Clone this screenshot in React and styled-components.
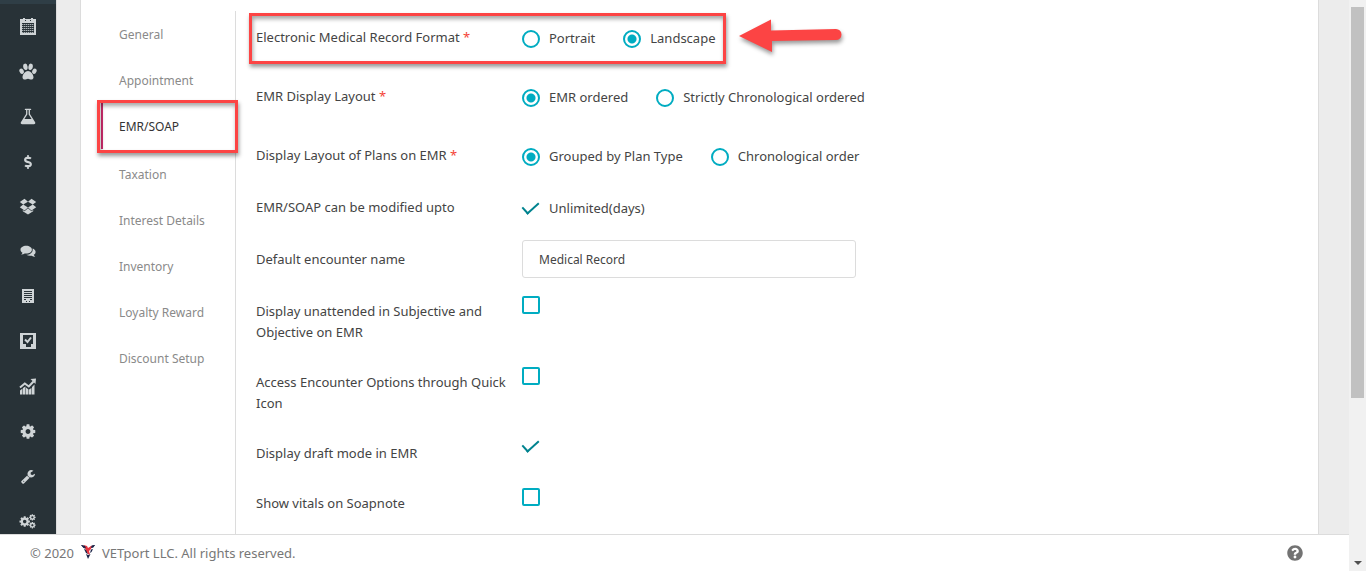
import React, { useState } from "react"
import styled, { createGlobalStyle } from "styled-components"
import { FaDollarSign, FaQuestionCircle } from "react-icons/fa"

const GlobalStyle = createGlobalStyle`
  * {
    box-sizing: border-box;
  }
  body {
    margin: 0;
    font-family: "Noto Sans", "Open Sans", sans-serif;
    font-size: 13px;
    line-height: 21px;
    color: #444;
    background: #fff;
  }
`

const Screen = styled.div`
  display: flex;
  height: 100vh;
  overflow: hidden;
`

const Page = styled.div`
  display: flex;
  flex-direction: column;
  flex: 1;
  min-width: 0;
`

const Body = styled.div`
  display: flex;
  flex: 1;
  min-height: 0;
`

const Sidebar = styled.nav`
  display: flex;
  flex-direction: column;
  flex: none;
  width: 56px;
  border-top: 4px solid #2f3e46;
  background: #283237;
  overflow: hidden;
`

const SidebarLink = styled.a`
  display: flex;
  flex: none;
  justify-content: center;
  align-items: center;
  height: 45px;
  color: #cfd4d6;
`

const Workspace = styled.main`
  flex: 1;
  min-width: 0;
  padding: 0 30px 0 23px;
  border-left: 1px solid #dcdcdc;
  background: #ececec;
  overflow: hidden;
`

const Card = styled.div`
  display: flex;
  min-height: 100%;
  border: solid #dcdcdc;
  border-width: 0 1px;
  background: #fff;
`

const Tabs = styled.nav`
  display: flex;
  flex-direction: column;
  flex: none;
  width: 155px;
  margin-top: 11px;
  padding-left: 20px;
  border-right: 1px solid #dcdcdc;
`

const Tab = styled.a`
  position: relative;
  display: flex;
  align-items: center;
  height: 46px;
  margin-bottom: ${(p) => (p.$active ? "2px" : 0)};
  padding-left: 16px;
  border-left: 2px solid ${(p) => (p.$active ? "#d02c6e" : "transparent")};
  color: ${(p) => (p.$active ? "#333" : "#8a8a8a")};
  font-size: 12px;
  text-decoration: none;
`

const Form = styled.form`
  flex: 1;
  min-width: 0;
  padding: 8px 20px 0;
`

const Row = styled.div`
  position: relative;
  display: grid;
  grid-template-columns: 250px 1fr;
  column-gap: 16px;
  align-items: center;
  min-height: ${(p) => p.$height}px;
`

const CheckRow = styled.div`
  display: grid;
  grid-template-columns: 250px 1fr;
  column-gap: 16px;
  align-items: start;
  padding: 8px 0 16px;

  > label {
    padding-top: 5px;
  }
`

const Required = styled.span`
  color: #f44336;
`

const Options = styled.div`
  display: flex;
  flex-wrap: wrap;
  gap: 28px;
  padding-top: 2px;
`

const Option = styled.label`
  display: flex;
  align-items: center;
  gap: 9px;
`

const Radio = styled.input.attrs({ type: "radio" })`
  appearance: none;
  width: 18px;
  height: 18px;
  margin: 0;
  border: 2px solid #00acc1;
  border-radius: 50%;
  background: #fff;

  &:checked {
    background: radial-gradient(circle, #00acc1 4px, #fff 5px);
  }
`

const Checkbox = styled.input.attrs({ type: "checkbox" })`
  appearance: none;
  display: flex;
  justify-content: center;
  width: 18px;
  height: 18px;
  margin: 0;
  border: 2px solid #00acc1;
  border-radius: 2px;

  &:checked {
    border-color: transparent;
  }

  &:checked::before {
    content: "";
    width: 7px;
    height: 14px;
    margin: -4px 2px 0 0;
    border: solid #00838f;
    border-width: 0 2px 2px 0;
    transform: rotate(48deg);
  }
`

const TextInput = styled.input`
  width: 100%;
  max-width: 334px;
  height: 38px;
  padding: 0 16px;
  border: 1px solid #dcdcdc;
  border-radius: 3px;
  color: #444;
  font-family: inherit;
  font-size: 12px;
`

const Highlight = styled.span`
  position: absolute;
  border: 3px solid #fc4444;
  box-shadow: 1px 3px 4px rgba(0, 0, 0, 0.4),
    inset 1px 3px 4px rgba(0, 0, 0, 0.35);
  pointer-events: none;
`

const TabHighlight = styled(Highlight)`
  inset: -3px -3px -4px -6px;
`

const RowHighlight = styled(Highlight)`
  top: 5px;
  left: -7px;
  width: 477px;
  height: 51px;
`

const Arrow = styled.svg`
  position: absolute;
  top: 8px;
  left: 480px;
  filter: drop-shadow(1px 3px 2px rgba(0, 0, 0, 0.4));
`

const Footer = styled.footer`
  display: flex;
  justify-content: space-between;
  align-items: center;
  flex: none;
  height: 37px;
  padding: 0 46px 0 30px;
  border-top: 1px solid #dcdcdc;
  color: #777;
`

const Copyright = styled.div`
  display: flex;
  align-items: center;
  gap: 7px;
`

const HelpButton = styled.button`
  display: flex;
  padding: 0;
  border: 0;
  background: none;
  color: #737373;
`

const ScrollTrack = styled.div`
  display: flex;
  flex-direction: column;
  justify-content: space-between;
  align-items: center;
  flex: none;
  width: 17px;
  padding: 7px 0 6px;
  background: #f1f1f1;
`

const ScrollThumb = styled.div`
  width: 13px;
  height: 70%;
  background: #c1c1c1;
`

const ScrollArrow = styled.div`
  border: 4px solid transparent;
  border-top-color: #505050;
  border-bottom: 0;
`

const cogPath =
  "M1152 896q0-106-75-181t-181-75-181 75-75 181 75 181 181 75 181-75 75-181zm512-109v222q0 12-8 23t-20 13l-185 28q-19 54-39 91 35 50 107 138 10 12 10 25t-9 23q-27 37-99 108t-94 71q-12 0-26-9l-138-108q-44 23-91 38-16 136-29 186-7 28-36 28h-222q-14 0-24.5-8.500t-11.500-21.500l-28-184q-49-16-90-37l-141 107q-10 9-25 9-14 0-25-11-126-114-165-168-7-10-7-23 0-12 8-23 15-21 51-66.500t54-70.500q-27-50-41-99l-183-27q-13-2-21-12.500t-8-23.500v-222q0-12 8-23t19-13l186-28q14-46 39-92-40-57-107-138-10-12-10-24 0-10 9-23 26-36 98.500-107.500t94.500-71.500q13 0 26 10l138 107q44-23 91-38 16-136 29-186 7-28 36-28h222q14 0 24.500 8.500t11.500 21.500l28 184q49 16 90 37l142-107q9-9 24-9 13 0 25 10 129 119 165 170 7 8 7 22 0 12-8 23-15 21-51 66.500t-54 70.500q26 50 41 98l183 28q13 2 21 12.500t8 23.500z"

const CalendarIcon = () => (
  <svg width="16" height="17" viewBox="0 0 16 17" fill="currentColor">
    <path fillRule="evenodd" d="M0 1h16v16H0zM2 5v10h12V5z" />
    <path d="M3 0h2v2H3zM11 0h2v2h-2z" />
    <path
      d="M2 6.500h12M2 8.500h12M2 10.500h12M2 12.500h12M2 14.500h12"
      stroke="currentColor"
      strokeDasharray="1.400 .6"
      opacity=".8"
    />
    <path d="M5 2.500h1M10 2.500h1" stroke="#283237" />
  </svg>
)

const PawIcon = () => (
  <svg width="18" height="17" viewBox="0 0 18 17" fill="currentColor">
    <ellipse cx="6.400" cy="3.800" rx="2.200" ry="3.200" transform="rotate(-10 6.400 3.800)" />
    <ellipse cx="11.600" cy="3.800" rx="2.200" ry="3.200" transform="rotate(10 11.600 3.800)" />
    <ellipse cx="2.600" cy="8.200" rx="2.100" ry="2.800" transform="rotate(-25 2.600 8.200)" />
    <ellipse cx="15.400" cy="8.200" rx="2.100" ry="2.800" transform="rotate(25 15.400 8.200)" />
    <path d="M9 8c2.500 0 5.500 3.500 5.500 6.200 0 1.700-1 2.300-2.300 2.300S10.300 15.700 9 15.700s-2 .8-3.200.8-2.300-.6-2.300-2.300C3.500 11.500 6.500 8 9 8z" />
  </svg>
)

const FlaskIcon = () => (
  <svg width="18" height="19" viewBox="0 0 1792 1792" fill="currentColor">
    <path d="M1591 1448q56 89 21.500 152.500t-140.500 63.500h-1152q-106 0-140.500-63.500t21.500-152.500l503-793v-399h-64q-26 0-45-19t-19-45 19-45 45-19h512q26 0 45 19t19 45-19 45-45 19h-64v399zm-779-725l-272 429h712l-272-429-20-31v-436h-128v436z" />
  </svg>
)

const DropboxIcon = () => (
  <svg width="18" height="17" viewBox="0 0 18 17" fill="currentColor">
    <path d="M5.500.8L9 3.700 4.200 6.600.8 4zM12.500.8L9 3.700l4.800 2.900L17.200 4zM.8 9.300l3.400-2.700L9 9.500l-3.500 2.900zM17.200 9.300l-3.400-2.700L9 9.500l3.500 2.900z" />
    <path d="M9 10.300l3.500 2.900 1.700-1.100v1.200L9 16.500l-5.200-3.200v-1.200l1.700 1.100z" />
  </svg>
)

const CommentsIcon = () => (
  <svg width="16" height="13" viewBox="0 0 16 13" fill="currentColor">
    <path d="M12.600 3.500c1.800.7 3 1.900 3 3.400 0 1.200-.7 2.200-1.800 2.900.2.900.7 1.400 1.400 1.900-1.400.1-2.600-.3-3.500-1-2 .3-4 0-5.400-.9 4-.1 6.900-2.400 6.300-6.300z" />
    <path d="M6.200.8c3.200 0 5.700 1.700 5.700 3.900S9.400 8.600 6.200 8.600c-.5 0-1 0-1.500-.1-1 .8-2.200 1.200-3.600 1.100.7-.5 1.200-1 1.400-1.800C1.300 7.100.5 6 .5 4.700.5 2.500 3 .8 6.200.8z" />
  </svg>
)

const BuildingIcon = () => (
  <svg width="12" height="15" viewBox="0 0 12 15" fill="currentColor">
    <path
      fillRule="evenodd"
      d="M0 0h12v14H0zM2 2v1h8V2zM2 4v1h8V4zM2 6v1h8V6zM2 8v1h8V8zM2 10v1h2v-1zM8 10v1h2v-1zM4 12v1h1v-1zM7 12v1h1v-1z"
    />
  </svg>
)

const InboxCheckIcon = () => (
  <svg width="18" height="17" viewBox="0 0 18 17" fill="currentColor">
    <path
      fillRule="evenodd"
      d="M1 0h16v16H1zM4 2v9h3v3h5v-3h2V2z"
    />
    <path d="M6 6.500l2.500 2.500L12 4.500" stroke="currentColor" strokeWidth="2" fill="none" />
  </svg>
)

const ChartIcon = () => (
  <svg width="18" height="17" viewBox="0 0 18 17" fill="currentColor">
    <path d="M1 12.500l2.500-2V16.500H1zM4 10l2.500-1.500v8H4zM7 9.500l2.500 2v5H7zM10 11.500l2.500-1.500v6.500H10zM13 9l2.500-2.500v10H13z" />
    <path d="M1 9.500L5.800 5.500l4 3L14.500 3.500" stroke="currentColor" strokeWidth="2" fill="none" />
    <path d="M11.500 1l5.500-.5-.5 5.500z" />
  </svg>
)

const CogIcon = () => (
  <svg width="18" height="17" viewBox="0 0 1792 1792" fill="currentColor">
    <path d={cogPath} />
  </svg>
)

const WrenchIcon = () => (
  <svg width="16" height="15" viewBox="0 0 1792 1792" fill="currentColor">
    <path d="M448 1472q0-26-19-45t-45-19-45 19-19 45 19 45 45 19 45-19 19-45zm644-420l-682 682q-37 37-90 37-52 0-91-37l-106-108q-38-36-38-90 0-53 38-91l681-681q39 98 114.500 173.500t173.500 114.500zm634-435q0 39-23 106-47 134-164.500 217.500t-258.500 83.500q-185 0-316.500-131.500t-131.500-316.500 131.500-316.500 316.500-131.500q58 0 121.500 16.500t107.500 46.500q16 11 16 28t-16 28l-293 169v224l193 107q5-3 79-48.500t135.500-81 70.500-35.500q15 0 23.500 10t8.500 25z" />
  </svg>
)

const CogsIcon = () => (
  <svg width="18" height="15" viewBox="0 0 18 15" fill="currentColor">
    <path transform="translate(-.4 1.500) scale(.0068)" d={cogPath} />
    <path transform="translate(9.600 -.4) scale(.0042)" d={cogPath} />
    <path transform="translate(9.600 7.400) scale(.0042)" d={cogPath} />
  </svg>
)

const VetportLogo = () => (
  <svg width="14" height="19" viewBox="0 0 14 19">
    <path d="M0 1l4 1 1.500 3L2.500 4zM14 1l-4 1-1 2 3-.5zM3 5l3 1 1 4-2-1zM12 5l-2 .5L9 9l1.500-1zM5 10l2 1 2.500-1L7 15z" fill="#1b2448" />
    <path d="M2.500 1L6 2l1 2 4-2.500-1 3.500-2 2 1 3.500-2-.5L4.500 5z" fill="#e8353f" />
    <path d="M0 1l4 1 1 2-2.500-.5zM14 1l-3 .5-1 2.500 2.500-.8z" fill="#1b2448" />
  </svg>
)

const sidebarItems = [
  { label: "Calendar", icon: <CalendarIcon /> },
  { label: "Patients", icon: <PawIcon /> },
  { label: "Lab", icon: <FlaskIcon /> },
  { label: "Billing", icon: <FaDollarSign size={14} /> },
  { label: "Inventory", icon: <DropboxIcon /> },
  { label: "Messages", icon: <CommentsIcon /> },
  { label: "Clinic", icon: <BuildingIcon /> },
  { label: "Tasks", icon: <InboxCheckIcon /> },
  { label: "Reports", icon: <ChartIcon /> },
  { label: "Settings", icon: <CogIcon /> },
  { label: "Tools", icon: <WrenchIcon /> },
  { label: "Administration", icon: <CogsIcon /> },
]

const tabs = [
  "General",
  "Appointment",
  "EMR/SOAP",
  "Taxation",
  "Interest Details",
  "Inventory",
  "Loyalty Reward",
  "Discount Setup",
]

const radioRows = [
  {
    name: "format",
    label: "Electronic Medical Record Format",
    options: ["Portrait", "Landscape"],
    selected: "Landscape",
    highlighted: true,
  },
  {
    name: "layout",
    label: "EMR Display Layout",
    options: ["EMR ordered", "Strictly Chronological ordered"],
    selected: "EMR ordered",
  },
  {
    name: "plans",
    label: "Display Layout of Plans on EMR",
    options: ["Grouped by Plan Type", "Chronological order"],
    selected: "Grouped by Plan Type",
  },
]

const checkRows = [
  {
    id: "unattended",
    label: "Display unattended in Subjective and Objective on EMR",
  },
  {
    id: "quick-icon",
    label: "Access Encounter Options through Quick Icon",
  },
  { id: "draft", label: "Display draft mode in EMR", checked: true },
  { id: "vitals", label: "Show vitals on Soapnote" },
]

const App = () => {
  const [activeTab, setActiveTab] = useState("EMR/SOAP")

  return (
    <>
      <GlobalStyle />
      <Screen>
        <Page>
          <Body>
            <Sidebar>
              {sidebarItems.map(({ label, icon }) => (
                <SidebarLink key={label} href="#" aria-label={label}>
                  {icon}
                </SidebarLink>
              ))}
            </Sidebar>
            <Workspace>
              <Card>
                <Tabs>
                  {tabs.map((tab) => (
                    <Tab
                      key={tab}
                      href="#"
                      $active={tab === activeTab}
                      onClick={() => setActiveTab(tab)}
                    >
                      {tab}
                      {tab === "EMR/SOAP" && <TabHighlight />}
                    </Tab>
                  ))}
                </Tabs>
                <Form>
                  {radioRows.map((row) => (
                    <Row
                      key={row.name}
                      $height={59}
                      role="radiogroup"
                      aria-labelledby={row.name}
                    >
                      <div id={row.name}>
                        {row.label} <Required>*</Required>
                      </div>
                      <Options>
                        {row.options.map((option) => (
                          <Option key={option}>
                            <Radio
                              name={row.name}
                              defaultChecked={option === row.selected}
                            />
                            {option}
                          </Option>
                        ))}
                      </Options>
                      {row.highlighted && (
                        <>
                          <RowHighlight />
                          <Arrow width="110" height="40" viewBox="0 0 110 40">
                            <path
                              d="M3 20L35 3.500V14.500L100 13a5.500 5.500 0 0 1 0 11L36 25V36z"
                              fill="#fc4444"
                            />
                          </Arrow>
                        </>
                      )}
                    </Row>
                  ))}
                  <Row $height={45}>
                    <div>EMR/SOAP can be modified upto</div>
                    <Options>
                      <Option>
                        <Checkbox defaultChecked />
                        Unlimited(days)
                      </Option>
                    </Options>
                  </Row>
                  <Row $height={58}>
                    <label htmlFor="encounter">Default encounter name</label>
                    <TextInput id="encounter" defaultValue="Medical Record" />
                  </Row>
                  {checkRows.map(({ id, label, checked }) => (
                    <CheckRow key={id}>
                      <label htmlFor={id}>{label}</label>
                      <Checkbox id={id} defaultChecked={checked} />
                    </CheckRow>
                  ))}
                </Form>
              </Card>
            </Workspace>
          </Body>
          <Footer>
            <Copyright>
              <span>© 2020</span>
              <VetportLogo />
              <span>VETport LLC. All rights reserved.</span>
            </Copyright>
            <HelpButton aria-label="Help">
              <FaQuestionCircle size={16} />
            </HelpButton>
          </Footer>
        </Page>
        <ScrollTrack>
          <ScrollThumb />
          <ScrollArrow />
        </ScrollTrack>
      </Screen>
    </>
  )
}

export default App
